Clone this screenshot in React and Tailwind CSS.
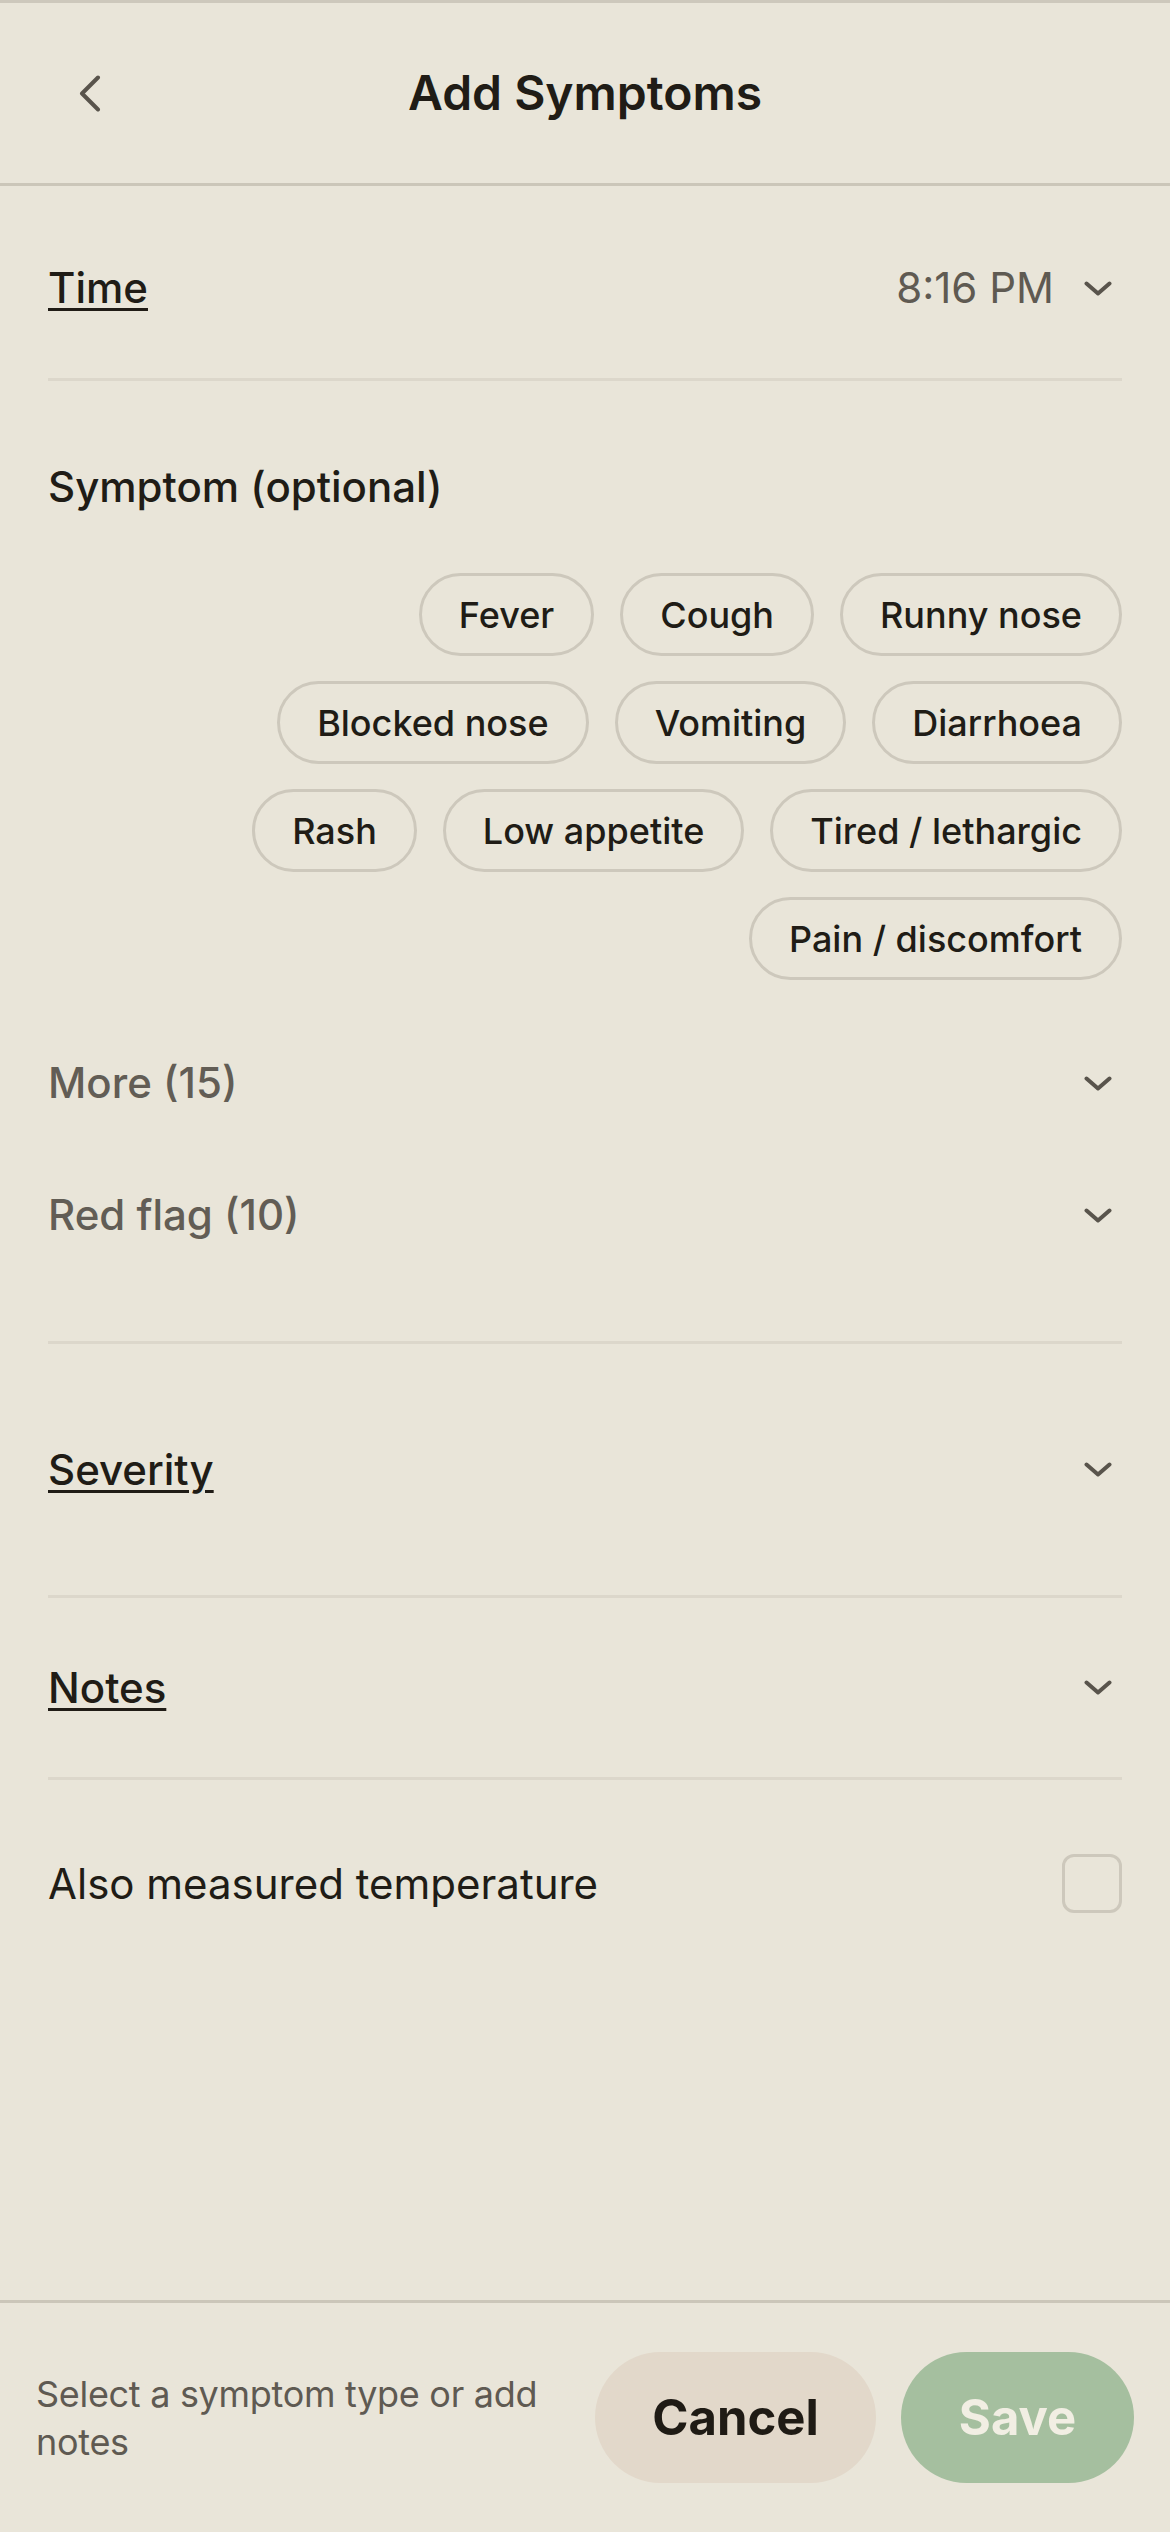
import { useState } from "react";

const chips = [
  "Fever",
  "Cough",
  "Runny nose",
  "Blocked nose",
  "Vomiting",
  "Diarrhoea",
  "Rash",
  "Low appetite",
  "Tired / lethargic",
  "Pain / discomfort",
];

function ChevronDown() {
  return (
    <svg width="28" height="15" viewBox="0 0 28 15" fill="none" className="mr-[10px] shrink-0">
      <path d="M2.5 2.5 L14 12.5 L25.5 2.5" stroke="#59544c" strokeWidth="4" strokeLinecap="round" strokeLinejoin="round" />
    </svg>
  );
}

function ChevronLeft() {
  return (
    <svg width="22" height="37" viewBox="0 0 22 37" fill="none">
      <path d="M19 2.5 L3 18.5 L19 34.5" stroke="#59544c" strokeWidth="4" strokeLinecap="round" strokeLinejoin="round" />
    </svg>
  );
}

export default function App() {
  const [selected, setSelected] = useState([]);
  const [measured, setMeasured] = useState(false);

  function toggle(name) {
    setSelected((list) =>
      list.includes(name) ? list.filter((item) => item !== name) : [...list, name],
    );
  }

  return (
    <div className="flex min-h-screen w-full flex-col border-t-[3px] border-[#cdc8bc] bg-[#e9e5d9] font-['Inter','Liberation_Sans',sans-serif] text-[#201c16]">
      <header className="grid h-[183px] grid-cols-[1fr_auto_1fr] items-center border-b-[3px] border-[#cbc6b9]">
        <button className="flex w-fit items-center pl-[79px]">
          <ChevronLeft />
        </button>
        <h1 className="text-[48px] font-semibold leading-none">Add Symptoms</h1>
        <div />
      </header>

      <main className="flex flex-1 flex-col px-[48px]">
        <div className="flex items-center justify-between border-b-[3px] border-[#dcd7cb] pt-[76px] pb-[64px] leading-[52px]">
          <span className="text-[42px] font-medium underline decoration-[3px] underline-offset-[5px]">Time</span>
          <button className="flex items-center gap-[30px]">
            <span className="text-[42px] text-[#5f5a52]">8:16 PM</span>
            <ChevronDown />
          </button>
        </div>

        <section className="flex flex-col border-b-[3px] border-[#dcd7cb] pt-[80px] pb-[100px]">
          <h2 className="text-[42px] font-medium leading-[52px]">Symptom (optional)</h2>
          <div className="mt-[60px] flex w-[950px] flex-wrap justify-end gap-x-[26px] gap-y-[25px] self-end">
            {chips.map((chip) => (
              <button
                key={chip}
                onClick={() => toggle(chip)}
                className={
                  selected.includes(chip)
                    ? "flex h-[83px] items-center rounded-full border-[3px] border-[#a5bf9f] bg-[#d6e0cf] px-[37px] text-[36px] font-medium"
                    : "flex h-[83px] items-center rounded-full border-[3px] border-[#cdc8bc] px-[37px] text-[36px] font-medium"
                }
              >
                {chip}
              </button>
            ))}
          </div>
          <div className="mt-[77px] flex flex-col gap-[80px]">
            <button className="flex items-center justify-between leading-[52px]">
              <span className="text-[42px] font-medium text-[#625d55]">More (15)</span>
              <ChevronDown />
            </button>
            <button className="flex items-center justify-between leading-[52px]">
              <span className="text-[42px] font-medium text-[#625d55]">Red flag (10)</span>
              <ChevronDown />
            </button>
          </div>
        </section>

        <button className="flex h-[254px] items-center justify-between border-b-[3px] border-[#dcd7cb]">
          <span className="text-[42px] font-medium underline decoration-[3px] underline-offset-[5px]">Severity</span>
          <ChevronDown />
        </button>

        <button className="flex h-[182px] items-center justify-between border-b-[3px] border-[#dcd7cb]">
          <span className="text-[42px] font-medium underline decoration-[3px] underline-offset-[5px]">Notes</span>
          <ChevronDown />
        </button>

        <label className="flex h-[206px] items-center justify-between">
          <span className="text-[42px]">Also measured temperature</span>
          <button
            onClick={() => setMeasured((value) => !value)}
            className={
              measured
                ? "h-[59px] w-[60px] rounded-[12px] border-[3px] border-[#a5bf9f] bg-[#a5bf9f]"
                : "h-[59px] w-[60px] rounded-[12px] border-[3px] border-[#cdc8bc]"
            }
          />
        </label>
      </main>

      <footer className="flex h-[232px] items-center gap-[28px] border-t-[3px] border-[#cbc6b9] px-[36px]">
        <p className="flex-1 text-[36px] leading-[48px] tracking-[-0.3px] text-[#5f5a52]">Select a symptom type or add notes</p>
        <div className="flex items-center gap-[25px]">
          <button className="h-[131px] w-[281px] rounded-full bg-[#e2d8ca] text-[49px] font-bold text-[#1f1b15]">
            Cancel
          </button>
          <button className="h-[131px] w-[233px] rounded-full bg-[#a5bf9f] text-[49px] font-bold text-[#f1eee3]">
            Save
          </button>
        </div>
      </footer>
    </div>
  );
}
